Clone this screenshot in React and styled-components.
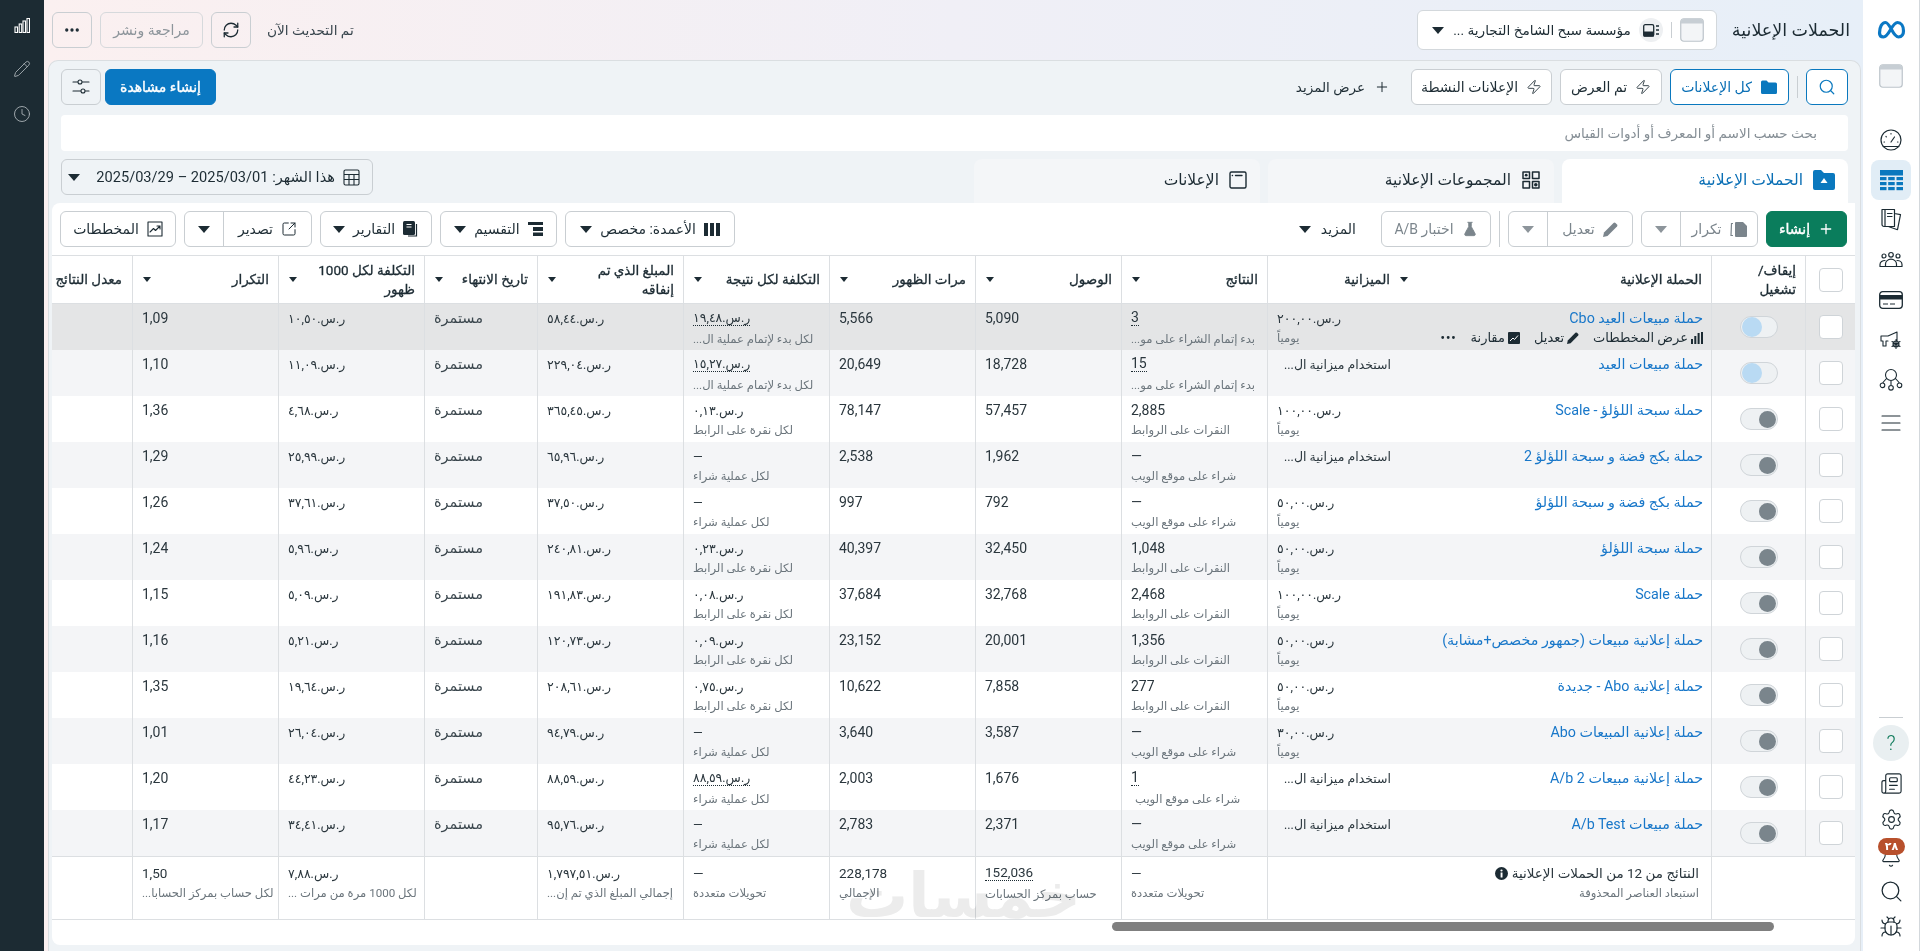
import React from 'react';
import styled, { createGlobalStyle } from 'styled-components';
import { Search, Zap, Plus, RefreshCw, Ellipsis, Pencil, Clock, Settings, Bell, Bug, Newspaper, FlaskConical, SquareArrowOutUpRight } from 'lucide-react';

const Global = createGlobalStyle`
  html, body { margin: 0; padding: 0; height: 100%; background: #fff; }
  * { box-sizing: border-box; }
  body { font-family: Roboto, "Noto Sans", "DejaVu Sans", sans-serif; font-size: 13px; color: #1c2b33; }
  svg { flex: none; }
`;
const COLS = '50px 94px 298px 146px 146px 146px 146px 146px 146px 113px 146px 146px 82px';
const LINE = '#dcdfe2';
const BORDER = '#c9ced2';

const Shell = styled.div`display: flex; direction: rtl; width: 1920px; height: 951px; overflow: hidden;`;
const Rail = styled.nav`width: 57px; flex: none; display: flex; flex-direction: column; align-items: center; padding-top: 10px; background: #fff; border-right: 1px solid #d3d8dc;`;
const RailSpacer = styled.div`flex: 1;`;
const RailEnd = styled.div`flex: 0 0 12px;`;
const RailItem = styled.div`
  width: ${p => p.$w || 40}px; height: ${p => p.$h || 40}px; margin-top: ${p => p.$mt || 0}px; flex: none;
  display: flex; align-items: center; justify-content: center; position: relative; color: #1c2b33;
  background: ${p => p.$bg || 'transparent'}; border-radius: ${p => p.$r || 6}px;
`;
const RailRule = styled.div`width: 24px; height: 1px; background: #c9ced2; margin-bottom: 7px;`;
const HelpMark = styled.span`font-size: 20px; font-weight: 300; color: #0f7a5a;`;
const Badge = styled.span`position: absolute; top: -7px; right: 6px; width: 27px; height: 17px; border-radius: 9px; background: #b8502c; color: #fff; font-size: 11px; font-weight: 700; display: flex; align-items: center; justify-content: center;`;
const Main = styled.main`flex: 1; min-width: 0; display: flex; flex-direction: column; background: linear-gradient(90deg, #fbf0f0 0%, #f0eff6 50%, #e7eff8 100%);`;
const DarkBar = styled.aside`width: 44px; flex: none; background: #1c2b33; display: flex; flex-direction: column; align-items: center; padding-top: 18px; gap: 27px; color: #a9b1b6;`;

const TopBar = styled.header`height: 60px; flex: none; display: flex; align-items: center; justify-content: space-between; padding: 0 13px 0 8px;`;
const TopGroup = styled.div`display: flex; align-items: center; gap: ${p => p.$gap || 8}px;`;
const Title = styled.h1`margin: 0 0 0 14px; font-size: 17.5px; font-weight: 500; white-space: nowrap;`;
const AccountSelect = styled.div`width: 300px; height: 40px; background: #fff; border: 1px solid #d3d8dc; border-radius: 6px; display: flex; align-items: center; padding: 0 12px 0 14px; gap: 8px;`;
const VRule = styled.span`width: 1px; height: ${p => p.$h || 16}px; background: ${BORDER}; flex: none;`;
const RoundIcon = styled.span`width: 24px; height: 24px; border-radius: 50%; background: #eef0f2; display: flex; align-items: center; justify-content: center; flex: none;`;
const AccountName = styled.span`flex: 1; font-size: 13.7px; white-space: nowrap; overflow: hidden;`;
const Caret = styled.i`
  display: block; flex: none; width: 0; height: 0;
  border-style: solid; border-color: ${p => p.$c || '#1c2b33'} transparent transparent;
  border-width: ${p => p.$s ? '5px 4px 0' : '7px 6px 0'};
`;
const Status = styled.span`font-size: 13.7px; color: #39464e; margin-left: 8px; white-space: nowrap;`;
const Btn = styled.button`
  width: ${p => p.$w}px; height: ${p => p.$h || 36}px; flex: none; display: flex; align-items: center; justify-content: center; gap: ${p => p.$gap || 8}px;
  padding: 0; border-radius: 6px; font: inherit; font-size: 14px; white-space: nowrap; direction: rtl;
  color: ${p => p.$c || '#1c2b33'}; background: ${p => p.$bg || 'transparent'}; border: 1px solid ${p => p.$bd || BORDER};
  ${p => p.$bold ? '-webkit-text-stroke: .35px currentColor;' : ''}
`;
const Split = styled.div`width: ${p => p.$w}px; height: 36px; flex: none; display: flex; border: 1px solid ${BORDER}; border-radius: 6px; background: #fff; color: ${p => p.$c || '#1c2b33'}; font-size: 14px;`;
const SplitMain = styled.span`flex: 1; display: flex; align-items: center; justify-content: center; gap: 8px; white-space: nowrap;`;
const SplitArrow = styled.span`width: 39px; flex: none; display: flex; align-items: center; justify-content: center; border-right: 1px solid ${BORDER};`;

const Panel = styled.section`flex: 1; min-height: 0; margin: 0 2px 0 4px; padding-top: 8px; display: flex; flex-direction: column; background: #eff3f6; border: 1px solid #dadee1; border-bottom: 0; border-radius: 10px 10px 0 0;`;
const FilterRow = styled.div`height: 36px; flex: none; display: flex; align-items: center; justify-content: space-between; padding: 0 12px 0 12px;`;
const MoreLink = styled.span`display: flex; align-items: center; gap: 9px; margin-right: 13px; font-size: 13.5px;`;
const SearchField = styled.div`height: 36px; margin: 10px 12px 8px; flex: none; background: #fff; border-radius: 4px; display: flex; align-items: center; padding-right: 31px; color: #858e95; font-size: 13.6px;`;
const TabsRow = styled.div`height: 44px; flex: none; display: flex; justify-content: space-between; align-items: flex-start; padding: 0 12px;`;
const Tabs = styled.div`display: flex; gap: 8px;`;
const Tab = styled.div`
  width: 286px; height: 44px; border-radius: 8px 8px 0 0; display: flex; align-items: center; gap: 10px; padding: 0 13px 3px;
  background: ${p => p.$on ? '#fff' : '#f4f6f8'}; color: ${p => p.$on ? '#0a6fb5' : '#1c2b33'}; font-size: 15.5px; font-weight: 500;
`;
const DateBtn = styled(Btn)`font-size: 14.6px; justify-content: flex-start; padding: 0 12px; gap: 8px;`;
const Grow = styled.span`flex: 1;`;

const Card = styled.div`flex: none; height: 742px; margin: 0 5px 0 3px; background: #fff; border-radius: 8px 0 8px 8px; display: flex; flex-direction: column; position: relative;`;
const Toolbar = styled.div`height: 53px; flex: none; display: flex; align-items: center; justify-content: space-between; padding: 0 8px; border-bottom: 1px solid ${LINE};`;
const ToolGroup = styled.div`display: flex; align-items: center; gap: 8px;`;
const PlainMore = styled.span`display: flex; align-items: center; gap: 10px; margin-right: 17px; font-size: 14px;`;

const GridRow = styled.div`display: grid; grid-template-columns: ${COLS}; height: ${p => p.$h}px; flex: none; background: ${p => p.$bg || '#fff'};`;
const HeadRow = styled(GridRow)`border-bottom: 1px solid ${LINE};`;
const SumRow = styled(GridRow)`border-top: 1px solid ${LINE}; border-bottom: 1px solid ${LINE};`;
const HeadCell = styled.div`
  display: flex; align-items: center; justify-content: ${p => p.$start ? 'flex-start' : 'space-between'}; gap: ${p => p.$start ? '10px' : '6px'};
  padding: ${p => p.$start ? '0 5px 0 10px' : '0 9px 0 10px'}; white-space: pre-line;
  font-size: 13.5px; line-height: 19px; -webkit-text-stroke: .3px currentColor; ${p => p.$noline ? '' : `border-left: 1px solid ${LINE};`}
`;
const RateHead = styled(HeadCell)`padding: 0 10px 0 0; white-space: nowrap;`;
const Cell = styled.div`
  display: flex; flex-direction: column; align-items: flex-end; padding: 5px 9px 0 9px; min-width: 0; overflow: hidden;
  ${p => p.$noline ? '' : `border-left: 1px solid ${LINE};`}
`;
const CenterCell = styled.div`
  display: flex; align-items: center; justify-content: center; ${p => p.$noline ? '' : `border-left: 1px solid ${LINE};`}
  ${p => p.$wide ? 'grid-column: span 2;' : ''}
`;
const CampaignCell = styled.div`display: flex; flex-direction: column; padding: 5px 8px 0 0; min-width: 0; position: relative;`;
const Value = styled.span`
  font-size: ${p => p.$fs || 14}px; line-height: 19px; white-space: nowrap; color: ${p => p.$c || '#2a363d'};
  ${p => p.$inset ? `margin-left: ${p.$inset}px;` : ''}
  ${p => p.$dotted ? 'border-bottom: 1px dotted #1c2b33; line-height: 15px; margin-bottom: 3px; margin-top: 1px;' : ''}
`;
const Sub = styled.span`font-size: 11.6px; line-height: 18px; margin-top: 1px; white-space: nowrap; color: #6b757c; ${p => p.$indent ? 'margin-left: 4px;' : ''}`;
const CampLink = styled.a`font-size: 14.3px; line-height: 19px; color: #1877c9; white-space: nowrap;`;
const Actions = styled.div`position: absolute; top: 26px; right: 8px; display: flex; align-items: center; gap: 14px; font-size: 13px; white-space: nowrap; color: #1c2b33;`;
const ActionItem = styled.span`display: flex; align-items: center; gap: 3px;`;
const Check = styled.span`width: 24px; height: 24px; border: 1px solid #cfd4d8; border-radius: 4px; background: #fff; display: block;`;
const Track = styled.span`width: 38px; height: 22px; border: 1px solid #d0d5d9; border-radius: 11px; background: #eef1f3; display: flex; justify-content: ${p => p.$on ? 'flex-end' : 'flex-start'}; align-items: center; padding: 0 1px;`;
const Knob = styled.span`width: ${p => p.$on ? 20 : 17}px; height: ${p => p.$on ? 20 : 17}px; border-radius: 50%; background: ${p => p.$on ? '#b9daf3' : '#7a858c'};`;
const SumMain = styled.span`font-size: 13.5px; line-height: 19px; white-space: nowrap; display: flex; align-items: center; gap: 4px; color: #2a363d;`;
const SumCamp = styled.div`padding: 7px 12px 0 0; display: flex; flex-direction: column; align-items: flex-start;`;
const SumCell = styled(Cell)`padding-top: 7px;`;
const ScrollTrack = styled.div`flex: 1; position: relative;`;
const Thumb = styled.div`position: absolute; top: 2px; right: 81px; width: 662px; height: 9px; border-radius: 5px; background: #7f7f7f;`;
const Watermark = styled.div`position: absolute; left: 794px; top: 660px; font-size: 62px; line-height: 66px; color: #ececec; font-weight: 700; white-space: nowrap; mix-blend-mode: multiply; pointer-events: none;`;
const Dots = styled.span`font-size: 12px; letter-spacing: 1px; font-weight: 700;`;

const S = (d, fill = 'none', stroke = 'currentColor', sw = 1.4) => <path d={d} fill={fill} stroke={stroke} strokeWidth={sw} strokeLinecap="round" strokeLinejoin="round" />;
const Ic = ({ s = 24, vb = 24, children }) => <svg width={s} height={s} viewBox={`0 0 ${vb} ${vb}`} fill="none">{children}</svg>;

const MetaLogo = () => <svg width="29" height="20" viewBox="0 0 29 20" fill="none"><path d="M2.5 13C2.5 7 5 2.5 8.5 2.5C13 2.5 16 17 21.5 17C25 17 26.5 14 26.5 11C26.5 6 24 2.5 20.5 2.5C15 2.5 12 17 6.5 17C3.5 17 2.5 15 2.5 13Z" stroke="#0b78c4" strokeWidth="3.2" /></svg>;
const AdWin = ({ s = 24 }) => <svg width={s} height={s} viewBox="0 0 24 24"><rect x=".75" y=".75" width="22.5" height="22.5" rx="3" fill="#f3f5f7" stroke="#bcc4ca" strokeWidth="1.2" /><path d="M1 4a3 3 0 0 1 3-3h16a3 3 0 0 1 3 3v1.5H1Z" fill="#c7ced4" /></svg>;
const GaugeI = () => <Ic>{S('M12 2a10 10 0 1 0 0 20a10 10 0 0 0 0-20ZM12 14l3.5-5M5 14h.5M18.5 14h.5M7 8.5l.3.3M12 5.5v.5M4 18.5h16', 'none', 'currentColor', 1.2)}</Ic>;
const TableI = () => <svg width="23" height="21" viewBox="0 0 23 21" fill="#0a78be"><rect width="23" height="5.5" /><rect y="7" width="6.5" height="3.2" /><rect x="8.2" y="7" width="6.5" height="3.2" /><rect x="16.5" y="7" width="6.5" height="3.2" /><rect y="12" width="6.5" height="3.2" /><rect x="8.2" y="12" width="6.5" height="3.2" /><rect x="16.5" y="12" width="6.5" height="3.2" /><rect y="17" width="6.5" height="3.2" /><rect x="8.2" y="17" width="6.5" height="3.2" /><rect x="16.5" y="17" width="6.5" height="3.2" /></svg>;
const NotesI = () => <Ic>{S('M3 1.5h12.5v17H5a2 2 0 0 1-2-2ZM6 1.5v17M8.5 5.5h4.5M8.5 8.5h4.5M15.5 5.5l6 1.2-3 15-8.5-3', 'none', 'currentColor', 1.2)}</Ic>;
const PeopleI = () => <Ic>{S('M12 4.5a2.3 2.3 0 1 0 0 4.6a2.3 2.3 0 0 0 0-4.6ZM5 6a2 2 0 1 0 0 4a2 2 0 0 0 0-4ZM19 6a2 2 0 1 0 0 4a2 2 0 0 0 0-4ZM6.5 18.5v-2.5a5.5 4.8 0 0 1 11 0v2.5ZM6 12.5c-2.5 0-5 1.5-5 4v2h5.5M18 12.5c2.5 0 5 1.5 5 4v2h-5.5', 'none', 'currentColor', 1.2)}</Ic>;
const CardI = () => <svg width="24" height="18" viewBox="0 0 24 18" fill="none"><rect x=".7" y=".7" width="22.6" height="16.6" rx="3" stroke="currentColor" strokeWidth="1.3" /><rect x="1" y="4" width="22" height="4.5" fill="currentColor" /><path d="M4 13h5M11 13h5" stroke="currentColor" strokeWidth="1.2" /></svg>;
const MegaI = () => <Ic>{S('M2 8h7l9-4v8.5M2 8v5h2M4 13v5h3v-5h2M14 16a3 3 0 1 0 6 0a3 3 0 0 0-6 0ZM17 11.5v9M13 13.5l8 5M21 13.5l-8 5', 'none', 'currentColor', 1.1)}</Ic>;
const NetI = () => <Ic>{S('M12 1.5a5.5 5.5 0 1 0 0 11a5.5 5.5 0 0 0 0-11ZM7.5 10.5L3.5 15M12 12.5V17M16.5 10.5L20.5 15M3.5 15a2.3 2.3 0 1 0 0 4.6a2.3 2.3 0 0 0 0-4.6ZM12 17.5a2.3 2.3 0 1 0 0 4.6a2.3 2.3 0 0 0 0-4.6ZM20.5 15a2.3 2.3 0 1 0 0 4.6a2.3 2.3 0 0 0 0-4.6Z', 'none', 'currentColor', 1.1)}</Ic>;
const MenuI = () => <Ic>{S('M3 5h18M3 12h18M3 19h18', 'none', 'currentColor', 1.1)}</Ic>;
const BarsOutline = () => <svg width="16" height="15" viewBox="0 0 16 15" fill="none" stroke="#fff" strokeWidth="1.1"><rect x="1" y="9" width="2.5" height="5.5" /><rect x="5.2" y="6" width="2.5" height="8.5" /><rect x="9" y="3" width="2.5" height="11.5" /><rect x="13" y=".5" width="2.5" height="14" /></svg>;
const FolderFill = ({ c = '#0a78be', s = 18 }) => <svg width={s} height={s} viewBox="0 0 18 18"><path d="M1 4a1.5 1.5 0 0 1 1.5-1.5h4L8.5 4.5h7A1.5 1.5 0 0 1 17 6v8.5a1.5 1.5 0 0 1-1.5 1.5h-13A1.5 1.5 0 0 1 1 14.5Z" fill={c} /></svg>;
const CampTab = () => <svg width="22" height="20" viewBox="0 0 22 20"><path d="M0 2a2 2 0 0 1 2-2h6l3 3h9a2 2 0 0 1 2 2v13a2 2 0 0 1-2 2H2a2 2 0 0 1-2-2Z" fill="#0a78be" /><path d="M11 8l3.5 5h-7Z" fill="#fff" /></svg>;
const SetsI = () => <Ic s={20} vb={20}>{S('M2 2h6.5v6.5H2ZM11.5 2H18v6.5h-6.5ZM2 11.5h6.5V18H2ZM11.5 11.5H18V18h-6.5Z', 'none', 'currentColor', 1.5)}<circle cx="5.2" cy="5.2" r="1.4" fill="currentColor" /><circle cx="14.8" cy="14.8" r="1.8" fill="currentColor" /></Ic>;
const AdsI = () => <Ic s={18} vb={18}>{S('M2.5 1h13a1.5 1.5 0 0 1 1.5 1.5v13a1.5 1.5 0 0 1-1.5 1.5h-13A1.5 1.5 0 0 1 1 15.5v-13A1.5 1.5 0 0 1 2.5 1ZM6.5 4.5h6.5M3.3 4.5h.2')}</Ic>;
const SlidersI = () => <Ic s={18} vb={18}>{S('M1 4h5M10 4h7M1 13h8M13 13h4M8 2a2 2 0 1 0 0 4a2 2 0 0 0 0-4ZM11 11a2 2 0 1 0 0 4a2 2 0 0 0 0-4Z', 'none', 'currentColor', 1.1)}</Ic>;
const CalI = () => <Ic s={17} vb={17}>{S('M2.5 1h12A1.5 1.5 0 0 1 16 2.5v12a1.5 1.5 0 0 1-1.5 1.5h-12A1.5 1.5 0 0 1 1 14.5v-12A1.5 1.5 0 0 1 2.5 1ZM1 5.5h15M1 10.5h15M6 5.5V16M11 5.5V16', 'none', 'currentColor', 1.1)}</Ic>;
const ColsI = () => <svg width="16" height="13" viewBox="0 0 16 13" fill="currentColor"><rect width="4" height="13" /><rect x="6" width="4" height="13" /><rect x="12" width="4" height="13" /></svg>;
const BreakI = () => <svg width="15" height="14" viewBox="0 0 15 14" fill="currentColor"><rect width="15" height="3" /><rect x="5" y="5" width="10" height="4" /><rect x="5" y="10.5" width="10" height="3.5" /></svg>;
const BookFill = () => <svg width="16" height="16" viewBox="0 0 16 16"><rect x="0" y="0" width="12" height="14" rx="1.5" fill="currentColor" /><path d="M3.5 3.5h5M3.5 6h5" stroke="#fff" strokeWidth="1" /><path d="M13.5 3v12H5" stroke="currentColor" strokeWidth="1.2" fill="none" /></svg>;
const TrendBox = () => <Ic s={16} vb={16}>{S('M1 1h14v14H1ZM3 11l3.5-3.5 2 2L13 5M10 5h3v3', 'none', 'currentColor', 1.1)}</Ic>;
const CopyFill = () => <svg width="17" height="15" viewBox="0 0 17 15" fill="currentColor"><path d="M6 0h7l4 4v10a1 1 0 0 1-1 1H6a1 1 0 0 1-1-1V1a1 1 0 0 1 1-1Z" /><path d="M3 1.5H1.5L1 13.5H3" fill="none" stroke="currentColor" strokeWidth="1.2" /></svg>;
const PencilFill = ({ s = 15 }) => <svg width={s} height={s} viewBox="0 0 15 15" fill="currentColor"><path d="M0 15l1-4.5L10.5 1a1.5 1.5 0 0 1 2 0l1.5 1.5a1.5 1.5 0 0 1 0 2L4.5 14Z" /></svg>;
const BarsFill = () => <svg width="12" height="12" viewBox="0 0 12 12" fill="currentColor"><rect y="7" width="2" height="5" /><rect x="3.3" y="4" width="2" height="8" /><rect x="6.6" y="1" width="2" height="11" /><rect x="10" y="0" width="2" height="12" /></svg>;
const CompareI = () => <svg width="12" height="12" viewBox="0 0 12 12"><rect width="12" height="12" rx="1" fill="#1c2b33" /><path d="M2 9l3-3 1.5 1.5L10 3.5" stroke="#fff" fill="none" /></svg>;
const InfoDot = () => <svg width="13" height="13" viewBox="0 0 13 13"><circle cx="6.5" cy="6.5" r="6.5" fill="#1c2b33" /><rect x="5.6" y="5.5" width="1.9" height="5" fill="#fff" /><circle cx="6.5" cy="3.5" r="1.1" fill="#fff" /></svg>;
const AccIcon = () => <svg width="16" height="13" viewBox="0 0 16 13" fill="none" stroke="#1c2b33"><rect x=".7" y=".7" width="10" height="11.5" rx="1.5" strokeWidth="1.3" /><rect x="1" y="8" width="9.5" height="4" fill="#1c2b33" /><path d="M13 2h3M13 6h3M13 10h3" strokeWidth="1.3" /></svg>;

const USE = 'استخدام ميزانية ال...';
const DAILY = 'يومياً';
const START = 'بدء إتمام الشراء على مو...';
const CLICKS = 'النقرات على الروابط';
const WEB = 'شراء على موقع الويب';
const PER_START = 'لكل بدء لإتمام عملية ال...';
const PER_CLICK = 'لكل نقرة على الرابط';
const PER_BUY = 'لكل عملية شراء';
const sar = v => `ر.س.${v}`;

const rows = [
  { name: 'حملة مبيعات العيد Cbo', budget: '٢٠٠,٠٠', res: '3', resSub: START, dot: true, reach: '5,090', imp: '5,566', cost: '١٩,٤٨', costSub: PER_START, costDot: true, spent: '٥٨,٤٤', cpm: '١٠,٥٠', freq: '1,09', on: true, hover: true },
  { name: 'حملة مبيعات العيد', res: '15', resSub: START, dot: true, reach: '18,728', imp: '20,649', cost: '١٥,٢٧', costSub: PER_START, costDot: true, spent: '٢٢٩,٠٤', cpm: '١١,٠٩', freq: '1,10', on: true },
  { name: 'حملة سبحة اللؤلؤ - Scale', budget: '١٠٠,٠٠', res: '2,885', resSub: CLICKS, reach: '57,457', imp: '78,147', cost: '٠,١٣', costSub: PER_CLICK, spent: '٣٦٥,٤٥', cpm: '٤,٦٨', freq: '1,36' },
  { name: 'حملة بكج فضة و سبحة اللؤلؤ 2', res: '—', resSub: WEB, reach: '1,962', imp: '2,538', costSub: PER_BUY, spent: '٦٥,٩٦', cpm: '٢٥,٩٩', freq: '1,29' },
  { name: 'حملة بكج فضة و سبحة اللؤلؤ', budget: '٥٠,٠٠', res: '—', resSub: WEB, reach: '792', imp: '997', costSub: PER_BUY, spent: '٣٧,٥٠', cpm: '٣٧,٦١', freq: '1,26' },
  { name: 'حملة سبحة اللؤلؤ', budget: '٥٠,٠٠', res: '1,048', resSub: CLICKS, reach: '32,450', imp: '40,397', cost: '٠,٢٣', costSub: PER_CLICK, spent: '٢٤٠,٨١', cpm: '٥,٩٦', freq: '1,24' },
  { name: 'حملة Scale', budget: '١٠٠,٠٠', res: '2,468', resSub: CLICKS, reach: '32,768', imp: '37,684', cost: '٠,٠٨', costSub: PER_CLICK, spent: '١٩١,٨٣', cpm: '٥,٠٩', freq: '1,15' },
  { name: 'حملة إعلانية مبيعات (جمهور مخصص+مشابة)', budget: '٥٠,٠٠', res: '1,356', resSub: CLICKS, reach: '20,001', imp: '23,152', cost: '٠,٠٩', costSub: PER_CLICK, spent: '١٢٠,٧٣', cpm: '٥,٢١', freq: '1,16' },
  { name: 'حملة إعلانية Abo - جديدة', budget: '٥٠,٠٠', res: '277', resSub: CLICKS, reach: '7,858', imp: '10,622', cost: '٠,٧٥', costSub: PER_CLICK, spent: '٢٠٨,٦١', cpm: '١٩,٦٤', freq: '1,35' },
  { name: 'حملة إعلانية المبيعات Abo', budget: '٣٠,٠٠', res: '—', resSub: WEB, reach: '3,587', imp: '3,640', costSub: PER_BUY, spent: '٩٤,٧٩', cpm: '٢٦,٠٤', freq: '1,01' },
  { name: 'حملة إعلانية مبيعات 2 A/b', res: '1', resSub: WEB, dot: true, reach: '1,676', imp: '2,003', cost: '٨٨,٥٩', costSub: PER_BUY, costDot: true, spent: '٨٨,٥٩', cpm: '٤٤,٢٣', freq: '1,20' },
  { name: 'حملة مبيعات A/b Test', res: '—', resSub: WEB, reach: '2,371', imp: '2,783', costSub: PER_BUY, spent: '٩٥,٧٦', cpm: '٣٤,٤١', freq: '1,17' },
];

const heads = ['النتائج', 'الوصول', 'مرات الظهور', 'التكلفة لكل نتيجة', 'المبلغ الذي تم\nإنفاقه', 'تاريخ الانتهاء', 'التكلفة لكل 1000\nظهور', 'التكرار'];

const Row = ({ r, i }) => (
  <GridRow $h={46} $bg={r.hover ? '#e4e5e6' : i % 2 ? '#f4f5f7' : '#fff'}>
    <CenterCell><Check /></CenterCell>
    <CenterCell><Track $on={r.on}><Knob $on={r.on} /></Track></CenterCell>
    <CampaignCell>
      <CampLink>{r.name}</CampLink>
      {r.hover && (
        <Actions>
          <ActionItem><BarsFill />عرض المخططات</ActionItem>
          <ActionItem><PencilFill s={12} />تعديل</ActionItem>
          <ActionItem><CompareI />مقارنة</ActionItem>
          <Dots>•••</Dots>
        </Actions>
      )}
    </CampaignCell>
    <Cell>
      <Value $fs={12.5} $inset={r.budget ? 0 : 7}>{r.budget ? sar(r.budget) : USE}</Value>
      {r.budget && <Sub>{DAILY}</Sub>}
    </Cell>
    <Cell>
      <Value $dotted={r.dot}>{r.res}</Value>
      <Sub $indent={r.res === '1'}>{r.resSub}</Sub>
    </Cell>
    <Cell><Value>{r.reach}</Value></Cell>
    <Cell><Value>{r.imp}</Value></Cell>
    <Cell>
      <Value $fs={12.5} $dotted={r.costDot}>{r.cost ? sar(r.cost) : '—'}</Value>
      <Sub>{r.costSub}</Sub>
    </Cell>
    <Cell><Value $fs={12.5}>{sar(r.spent)}</Value></Cell>
    <Cell><Value $fs={14.5} $c="#3a464d">مستمرة</Value></Cell>
    <Cell><Value $fs={12.5}>{sar(r.cpm)}</Value></Cell>
    <Cell><Value>{r.freq}</Value></Cell>
    <Cell $noline />
  </GridRow>
);

export default function App() {
  return (
    <>
      <Global />
      <Shell>
        <Rail>
          <RailItem><MetaLogo /></RailItem>
          <RailItem $mt={6}><AdWin /></RailItem>
          <RailItem $mt={24}><GaugeI /></RailItem>
          <RailItem $bg="#e1edf6" $r={8}><TableI /></RailItem>
          <RailItem><NotesI /></RailItem>
          <RailItem><PeopleI /></RailItem>
          <RailItem><CardI /></RailItem>
          <RailItem><MegaI /></RailItem>
          <RailItem><NetI /></RailItem>
          <RailItem $mt={3}><MenuI /></RailItem>
          <RailSpacer />
          <RailRule />
          <RailItem $w={36} $h={36} $r={18} $bg="#e9eff1"><HelpMark>?</HelpMark></RailItem>
          <RailItem $h={24} $mt={10}><Newspaper size={23} strokeWidth={1.2} /></RailItem>
          <RailItem $h={24} $mt={12}><Settings size={23} strokeWidth={1.2} /></RailItem>
          <RailItem $h={24} $mt={14}><Bell size={22} strokeWidth={1.2} /><Badge>٢٨</Badge></RailItem>
          <RailItem $h={24} $mt={10}><Search size={25} strokeWidth={1.2} /></RailItem>
          <RailItem $h={24} $mt={12}><Bug size={24} strokeWidth={1.2} /></RailItem>
          <RailEnd />
        </Rail>
        <Main>
          <TopBar>
            <TopGroup $gap={1}>
              <Title>الحملات الإعلانية</Title>
              <AccountSelect>
                <AdWin />
                <VRule />
                <RoundIcon><AccIcon /></RoundIcon>
                <AccountName>مؤسسة سبح الشامخ التجارية ...</AccountName>
                <Caret />
              </AccountSelect>
            </TopGroup>
            <TopGroup>
              <Status>تم التحديث الآن</Status>
              <Btn $w={40}><RefreshCw size={18} strokeWidth={1.7} /></Btn>
              <Btn $w={103} $c="#8d959b" $bd="#d6d9dc">مراجعة ونشر</Btn>
              <Btn $w={40}><Ellipsis size={18} strokeWidth={2.4} /></Btn>
            </TopGroup>
          </TopBar>
          <Panel>
            <FilterRow>
              <TopGroup>
                <Btn $w={42} $bg="#fff" $bd="#0a78be" $c="#0a78be"><Search size={18} strokeWidth={1.6} /></Btn>
                <VRule $h={22} />
                <Btn $w={119} $bg="#fff" $bd="#0a78be" $c="#0a6fb5"><FolderFill />كل الإعلانات</Btn>
                <Btn $w={102} $bg="#fff"><Zap size={16} strokeWidth={1.3} />تم العرض</Btn>
                <Btn $w={141} $bg="#fff"><Zap size={16} strokeWidth={1.3} />الإعلانات النشطة</Btn>
                <MoreLink><Plus size={16} strokeWidth={1.5} />عرض المزيد</MoreLink>
              </TopGroup>
              <TopGroup $gap={4}>
                <Btn $w={111} $bg="#0a78c2" $bd="#0a78c2" $c="#fff" $bold>إنشاء مشاهدة</Btn>
                <Btn $w={40}><SlidersI /></Btn>
              </TopGroup>
            </FilterRow>
            <SearchField>بحث حسب الاسم أو المعرف أو أدوات القياس</SearchField>
            <TabsRow>
              <Tabs>
                <Tab $on><CampTab />الحملات الإعلانية</Tab>
                <Tab><SetsI />المجموعات الإعلانية</Tab>
                <Tab><AdsI />الإعلانات</Tab>
              </Tabs>
              <DateBtn $w={312}><CalI />هذا الشهر: 2025/03/01 – 2025/03/29<Grow /><Caret /></DateBtn>
            </TabsRow>
            <Card>
              <Toolbar>
                <ToolGroup>
                  <Btn $w={81} $bg="#0a7d5c" $bd="#0a7d5c" $c="#fff" $bold><Plus size={16} strokeWidth={2} />إنشاء</Btn>
                  <Split $w={117} $c="#7b858c"><SplitMain><CopyFill />تكرار</SplitMain><SplitArrow><Caret $c="#8d959b" /></SplitArrow></Split>
                  <Split $w={125} $c="#7b858c"><SplitMain><PencilFill />تعديل</SplitMain><SplitArrow><Caret $c="#8d959b" /></SplitArrow></Split>
                  <VRule $h={36} />
                  <Btn $w={110} $c="#7b858c" $bg="#fff"><FlaskConical size={16} fill="currentColor" strokeWidth={1.2} />اختبار A/B</Btn>
                  <PlainMore>المزيد<Caret /></PlainMore>
                </ToolGroup>
                <ToolGroup>
                  <Btn $w={170} $bg="#fff"><ColsI />الأعمدة: مخصص<Caret /></Btn>
                  <Btn $w={117} $bg="#fff"><BreakI />التقسيم<Caret /></Btn>
                  <Btn $w={112} $bg="#fff"><BookFill />التقارير<Caret /></Btn>
                  <Split $w={128}><SplitMain><SquareArrowOutUpRight size={16} strokeWidth={1.5} />تصدير</SplitMain><SplitArrow><Caret /></SplitArrow></Split>
                  <Btn $w={116} $bg="#fff"><TrendBox />المخططات</Btn>
                </ToolGroup>
              </Toolbar>
              <HeadRow $h={48}>
                <CenterCell><Check /></CenterCell>
                <HeadCell>{'إيقاف/\nتشغيل'}</HeadCell>
                <HeadCell $noline>الحملة الإعلانية</HeadCell>
                <HeadCell $start><Caret $s />الميزانية</HeadCell>
                {heads.map(h => <HeadCell key={h}>{h}<Caret $s /></HeadCell>)}
                <RateHead $noline>معدل النتائج</RateHead>
              </HeadRow>
              {rows.map((r, i) => <Row key={r.name} r={r} i={i} />)}
              <SumRow $h={64}>
                <CenterCell $wide />
                <SumCamp>
                  <SumMain>النتائج من 12 من الحملات الإعلانية <InfoDot /></SumMain>
                  <Sub>استبعاد العناصر المحذوفة</Sub>
                </SumCamp>
                <SumCell />
                <SumCell><SumMain>—</SumMain><Sub>تحويلات متعددة</Sub></SumCell>
                <SumCell><Value $dotted $fs={13.5}>152,036</Value><Sub>حساب بمركز الحسابات</Sub></SumCell>
                <SumCell><SumMain>228,178</SumMain><Sub>الإجمالي</Sub></SumCell>
                <SumCell><SumMain>—</SumMain><Sub>تحويلات متعددة</Sub></SumCell>
                <SumCell><Value $fs={12.5}>{sar('١,٧٩٧,٥١')}</Value><Sub>إجمالي المبلغ الذي تم إن...</Sub></SumCell>
                <SumCell />
                <SumCell><Value $fs={12.5}>{sar('٧,٨٨')}</Value><Sub>لكل 1000 مرة من مرات ...</Sub></SumCell>
                <SumCell><SumMain>1,50</SumMain><Sub>لكل حساب بمركز الحسابا...</Sub></SumCell>
                <SumCell $noline />
              </SumRow>
              <ScrollTrack>
                <Thumb />
              </ScrollTrack>
              <Watermark>خمسات</Watermark>
            </Card>
          </Panel>
        </Main>
        <DarkBar>
          <BarsOutline />
          <Pencil size={18} strokeWidth={1.2} />
          <Clock size={18} strokeWidth={1.2} />
        </DarkBar>
      </Shell>
    </>
  );
}
